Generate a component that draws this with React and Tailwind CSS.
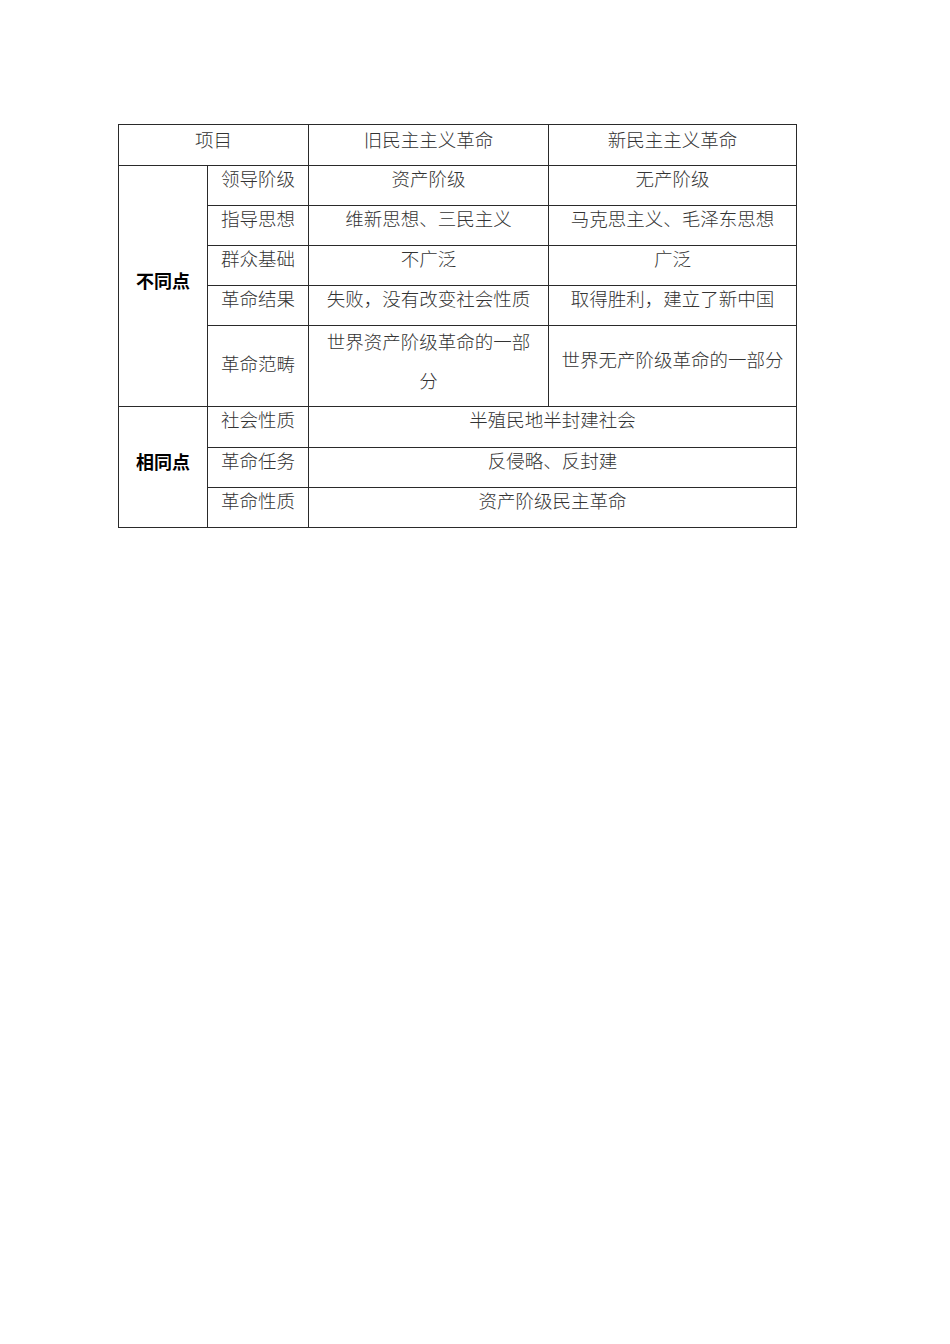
const font = { fontFamily: '"Noto Sans CJK SC", "Noto Sans", sans-serif' };

const diffRows = [
  ["领导阶级", "资产阶级", "无产阶级"],
  ["指导思想", "维新思想、三民主义", "马克思主义、毛泽东思想"],
  ["群众基础", "不广泛", "广泛"],
  ["革命结果", "失败，没有改变社会性质", "取得胜利，建立了新中国"],
];

const sameRows = [
  ["社会性质", "半殖民地半封建社会"],
  ["革命任务", "反侵略、反封建"],
  ["革命性质", "资产阶级民主革命"],
];

const cell = "border border-[#2a2a2a] text-center align-top p-0 leading-[25px]";

export default function App() {
  return (
    <div className="min-h-screen bg-white pt-[124px] pl-[118px]" style={font}>
      <table className="border-collapse table-fixed w-[678px] text-[18.5px] font-light text-[#333]">
        <colgroup>
          <col className="w-[89px]" />
          <col className="w-[101px]" />
          <col className="w-[240px]" />
          <col className="w-[248px]" />
        </colgroup>
        <tbody>
          <tr className="h-[41px]">
            <td colSpan={2} className={`${cell} pt-[2px]`}>项目</td>
            <td className={`${cell} pt-[2px]`}>旧民主主义革命</td>
            <td className={`${cell} pt-[2px]`}>新民主主义革命</td>
          </tr>
          {diffRows.map((r, i) => (
            <tr key={r[0]} className="h-[40px]">
              {i === 0 && (
                <td rowSpan={5} className="border border-[#2a2a2a] text-center align-middle pb-[11px] font-bold text-black text-[18px]">
                  不同点
                </td>
              )}
              <td className={cell}>{r[0]}</td>
              <td className={cell}>{r[1]}</td>
              <td className={cell}>{r[2]}</td>
            </tr>
          ))}
          <tr className="h-[81px]">
            <td className="border border-[#2a2a2a] text-center align-middle pb-[6px] leading-[25px]">革命范畴</td>
            <td className="border border-[#2a2a2a] text-center align-top leading-[39px] px-[12px]">
              <div className="-mt-[4px] pb-[4px]">世界资产阶级革命的一部分</div>
            </td>
            <td className="border border-[#2a2a2a] text-center align-middle pb-[14px] leading-[25px]">世界无产阶级革命的一部分</td>
          </tr>
          {sameRows.map((r, i) => (
            <tr key={r[0]} className={i === 0 ? "h-[41px]" : "h-[40px]"}>
              {i === 0 && (
                <td rowSpan={3} className="border border-[#2a2a2a] text-center align-middle pb-[11px] font-bold text-black text-[18px]">
                  相同点
                </td>
              )}
              <td className={cell}>{r[0]}</td>
              <td colSpan={2} className={cell}>{r[1]}</td>
            </tr>
          ))}
        </tbody>
      </table>
    </div>
  );
}
